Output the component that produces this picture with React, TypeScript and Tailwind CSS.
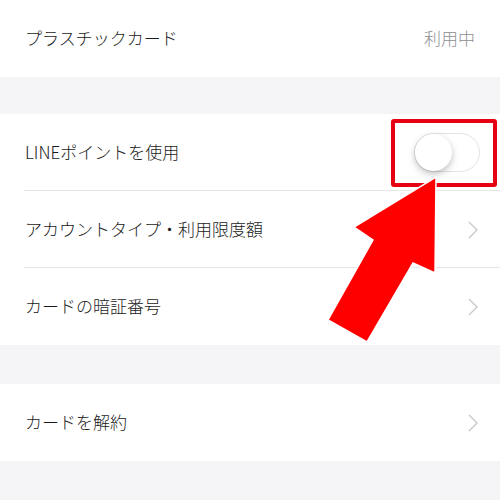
import React from 'react';

function Chevron() {
  return (
    <svg width="10" height="18" viewBox="0 0 10 18" className="shrink-0">
      <path d="M1 1 L9 9 L1 17" fill="none" stroke="#c7c7cc" strokeWidth="1.3" />
    </svg>
  );
}

function Row({ label, right, divider }: { label: string; right?: React.ReactNode; divider?: boolean }) {
  return (
    <div className="relative flex h-[77px] items-center justify-between bg-white pl-[25px] pr-[22px]">
      <span className="-mt-[2px] text-[17px] font-light text-[#1a1a1a]">{label}</span>
      {right}
      {divider && <div className="absolute bottom-0 left-[24px] right-0 h-px bg-[#e6e6e6]" />}
    </div>
  );
}

export default function App() {
  return (
    <div
      className="relative h-[500px] w-[500px] overflow-hidden bg-[#f5f5f7]"
      style={{ fontFamily: '"Noto Sans CJK JP", "Noto Sans", sans-serif' }}
    >
      <Row label="プラスチックカード" right={<span className="-mt-[2px] pr-[3px] text-[17px] font-light text-[#8e8e93]">利用中</span>} />
      <div className="h-[37px]" />
      <Row
        label="LINEポイントを使用"
        divider
        right={
          <div className="mr-[-2px] flex h-[39px] w-[66px] items-center rounded-full border border-[#e3e3e3] bg-white">
            <div className="h-[37px] w-[37px] rounded-full bg-white shadow-[0_3px_7px_rgba(0,0,0,0.25)]" />
          </div>
        }
      />
      <Row label="アカウントタイプ・利用限度額" divider right={<Chevron />} />
      <Row label="カードの暗証番号" right={<Chevron />} />
      <div className="h-[39px]" />
      <Row label="カードを解約" right={<Chevron />} />

      <div className="absolute left-[391px] top-[119px] h-[68px] w-[106px] rounded-[3px] border-[4px] border-[#e60012]" />
      <svg className="absolute left-0 top-0" width="500" height="500" viewBox="0 0 500 500">
        <polygon
          points="436,177 435,273 413,263 367,342 328,320 373,240 354,227"
          fill="#ff0000"
          stroke="#ffffff"
          strokeWidth="1.5"
          strokeLinejoin="miter"
        />
      </svg>
    </div>
  );
}
